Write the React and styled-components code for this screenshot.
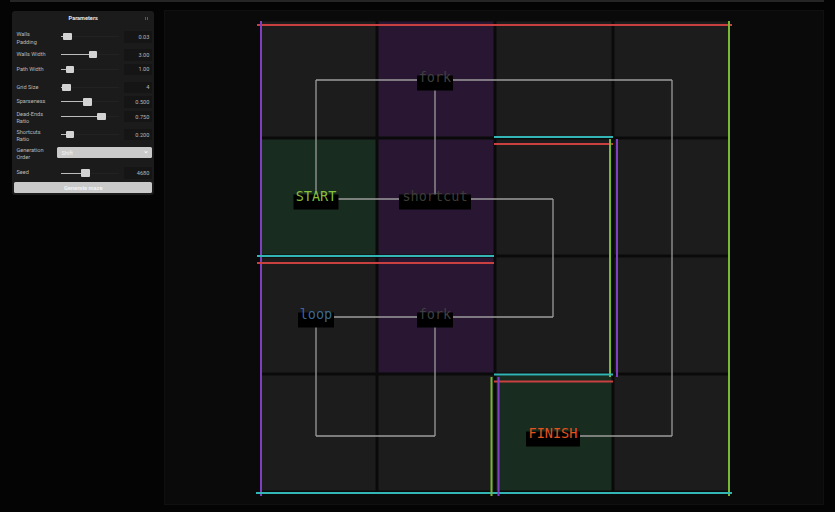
import React from 'react';
import styled, { createGlobalStyle } from 'styled-components';

const GlobalStyle = createGlobalStyle`
  html, body {
    margin: 0;
    padding: 0;
    background: #040404;
  }
  body {
    font-family: Roboto, 'Liberation Sans', sans-serif;
  }
`;

const Page = styled.div`
  width: 835px;
  height: 512px;
  box-sizing: border-box;
  padding: 0 11px 0 10px;
  overflow: hidden;
`;

const TopRule = styled.div`
  height: 2px;
  background: #252525;
`;

const Workspace = styled.div`
  display: flex;
  align-items: flex-start;
  gap: 10px;
  padding-left: 2px;
  margin-top: 8px;
`;

const Panel = styled.div`
  width: 142px;
  margin-top: 1px;
  box-sizing: border-box;
  padding: 0 1.6px 1.7px 2px;
  background: #1b1b1b;
  border-radius: 3px;
`;

const PanelHeader = styled.div`
  display: grid;
  grid-template-columns: 1fr auto 1fr;
  align-items: center;
  height: 14.5px;
`;

const PanelTitle = styled.div`
  grid-column: 2;
  font-size: 5.6px;
  font-weight: 700;
  color: #e8e8e8;
`;

const Grip = styled.svg`
  grid-column: 3;
  justify-self: end;
  margin-right: 4.5px;
`;

const PanelBody = styled.div`
  padding-top: 4px;
`;

const Row = styled.div`
  display: grid;
  grid-template-columns: 41px 1fr 28.4px;
  align-items: ${(p) => (p.$tall ? 'start' : 'center')};
  padding: 1.5px 0 1.5px 2.4px;
`;

const Label = styled.div`
  font-size: 5.6px;
  line-height: 7.5px;
  color: #b9b9b9;
  white-space: pre-line;
`;

const Track = styled.div`
  position: relative;
  height: 11.6px;
  margin-right: 3px;
  background: linear-gradient(#222, #222) no-repeat 3.3px 5.3px / calc(100% - 6px) 1px;
`;

const Fill = styled.div`
  position: absolute;
  top: 5.3px;
  left: 3.3px;
  height: 1px;
  background: #bdbdbd;
`;

const Thumb = styled.div`
  position: absolute;
  top: 2.1px;
  width: 8.4px;
  height: 7.4px;
  background: #d3d3d3;
  border-radius: 1px;
`;

const ValueBox = styled.div`
  height: 11.6px;
  display: flex;
  align-items: center;
  justify-content: flex-end;
  padding-right: 3px;
  background: #151515;
  border-radius: 1px;
  font-size: 5.6px;
  color: #b5b5b5;
`;

const Select = styled.div`
  grid-column: 2 / 4;
  height: 11.6px;
  display: flex;
  align-items: center;
  justify-content: space-between;
  padding: 0 4px;
  box-sizing: border-box;
  background: #cacaca;
  border-radius: 1.5px;
  font-size: 5.6px;
  color: #f4f4f4;
`;

const Spacer = styled.div`
  height: ${(p) => p.$h}px;
`;

const GenerateButton = styled.button`
  display: flex;
  align-items: center;
  justify-content: center;
  width: 100%;
  height: 11.6px;
  margin-top: 1.4px;
  padding: 0;
  border: none;
  border-radius: 1.5px;
  background: #c9c9c9;
  color: #f2f2f2;
  font-family: Roboto, 'Liberation Sans', sans-serif;
  font-size: 5.7px;
  font-weight: 700;
`;

const Canvas = styled.div`
  width: 660px;
  height: 495px;
  background: #0a0a0a;
  box-shadow: inset 0 0 0 1px #101010;
`;

const Board = styled.svg`
  display: block;
`;

const SliderRow = ({ label, value, min, max, text, tall }) => {
  const f = (value - min) / (max - min);
  const center = 1.4 + f * 57.2;
  return (
    <Row $tall={tall}>
      <Label>{label}</Label>
      <Track>
        <Fill style={{ width: `${center - 3.3}px` }} />
        <Thumb style={{ left: `${center - 4.2}px` }} />
      </Track>
      <ValueBox>{text}</ValueBox>
    </Row>
  );
};

const CELLS = [
  ['plain', 'room', 'plain', 'plain'],
  ['start', 'room', 'plain', 'plain'],
  ['plain', 'room', 'plain', 'plain'],
  ['plain', 'plain', 'start', 'plain'],
];

const CELL_FILL = { plain: '#1c1c1c', room: '#291632', start: '#182c20' };

const RED = '#c94040';
const CYAN = '#33b5b5';
const PURPLE = '#7e3fc0';
const GREEN = '#78b833';

const WALLS = [
  [257, 25, 732, 25, RED],
  [261, 21, 261, 496, PURPLE],
  [729, 21, 729, 496, GREEN],
  [256, 493, 732, 493, CYAN],
  [494, 137, 613, 137, CYAN],
  [494, 144, 613, 144, RED],
  [610, 139, 610, 377, GREEN],
  [617, 139, 617, 377, PURPLE],
  [257, 256, 494, 256, CYAN],
  [257, 263, 494, 263, RED],
  [494, 374.5, 613, 374.5, CYAN],
  [494, 381.5, 613, 381.5, RED],
  [491.5, 377, 491.5, 496, GREEN],
  [498.5, 377, 498.5, 496, PURPLE],
];

const PATHS = [
  [316, 80, 672, 80],
  [316, 80, 316, 199],
  [435, 80, 435, 199],
  [316, 199, 553, 199],
  [553, 199, 553, 317],
  [316, 317, 553, 317],
  [316, 317, 316, 436],
  [316, 436, 435, 436],
  [435, 317, 435, 436],
  [672, 80, 672, 436],
  [553, 436, 672, 436],
];

const NODES = [
  { x: 435, y: 80, text: 'fork', color: '#3f3f3f' },
  { x: 316, y: 199, text: 'START', color: '#84bf3c' },
  { x: 435, y: 199, text: 'shortcut', color: '#3e3c35' },
  { x: 316, y: 317, text: 'loop', color: '#3a6994' },
  { x: 435, y: 317, text: 'fork', color: '#3f3f3f' },
  { x: 553, y: 436, text: 'FINISH', color: '#e5521d' },
];

const Maze = () => (
  <Board width="660" height="495" viewBox="164 10 660 495">
    {CELLS.map((row, r) =>
      row.map((kind, c) => (
        <rect
          key={`${r}-${c}`}
          x={259 + c * 118 + 1.5}
          y={20 + r * 118 + 1.5}
          width="115"
          height="115"
          fill={CELL_FILL[kind]}
        />
      ))
    )}
    {PATHS.map(([x1, y1, x2, y2], i) => (
      <line key={i} x1={x1} y1={y1} x2={x2} y2={y2} stroke="#9c9c9c" strokeWidth="1.3" />
    ))}
    {NODES.map((n, i) => (
      <g key={i}>
        <rect x={n.x - 4.5 * n.text.length} y={n.y - 4.5} width={9 * n.text.length} height="15" fill="#000" />
        <text
          x={n.x}
          y={n.y + 1.5}
          textAnchor="middle"
          fill={n.color}
          fontFamily="'DejaVu Sans Mono', monospace"
          fontSize="13.5"
        >
          {n.text}
        </text>
      </g>
    ))}
    {WALLS.map(([x1, y1, x2, y2, color], i) => (
      <line key={i} x1={x1} y1={y1} x2={x2} y2={y2} stroke={color} strokeWidth="2" />
    ))}
  </Board>
);

export default function App() {
  return (
    <Page>
      <GlobalStyle />
      <TopRule />
      <Workspace>
        <Panel>
          <PanelHeader>
            <PanelTitle>Parameters</PanelTitle>
            <Grip width="3" height="3" viewBox="0 0 3 3">
              <rect x="0" y="0" width="0.8" height="3" fill="#6a6a6a" />
              <rect x="2.2" y="0" width="0.8" height="3" fill="#6a6a6a" />
            </Grip>
          </PanelHeader>
          <PanelBody>
            <SliderRow label={'Walls\nPadding'} tall value={0.03} min={0} max={0.2} text="0.03" />
            <SliderRow label="Walls Width" value={3} min={0} max={5} text="3.00" />
            <SliderRow label="Path Width" value={1} min={0} max={5} text="1.00" />
            <Spacer $h={3.4} />
            <SliderRow label="Grid Size" value={4} min={2} max={17} text="4" />
            <SliderRow label="Sparseness" value={0.5} min={0} max={1} text="0.500" />
            <SliderRow label={'Dead-Ends\nRatio'} tall value={0.75} min={0} max={1} text="0.750" />
            <SliderRow label={'Shortcuts\nRatio'} tall value={0.2} min={0} max={1} text="0.200" />
            <Row $tall>
              <Label>{'Generation\nOrder'}</Label>
              <Select>
                <span>Shift</span>
                <svg width="4" height="3" viewBox="0 0 4 3">
                  <path d="M0 0.5 L4 0.5 L2 2.6 Z" fill="#f4f4f4" />
                </svg>
              </Select>
            </Row>
            <Spacer $h={2.5} />
            <SliderRow label="Seed" value={4680} min={0} max={10000} text="4680" />
            <GenerateButton>Generate maze</GenerateButton>
          </PanelBody>
        </Panel>
        <Canvas>
          <Maze />
        </Canvas>
      </Workspace>
    </Page>
  );
}
